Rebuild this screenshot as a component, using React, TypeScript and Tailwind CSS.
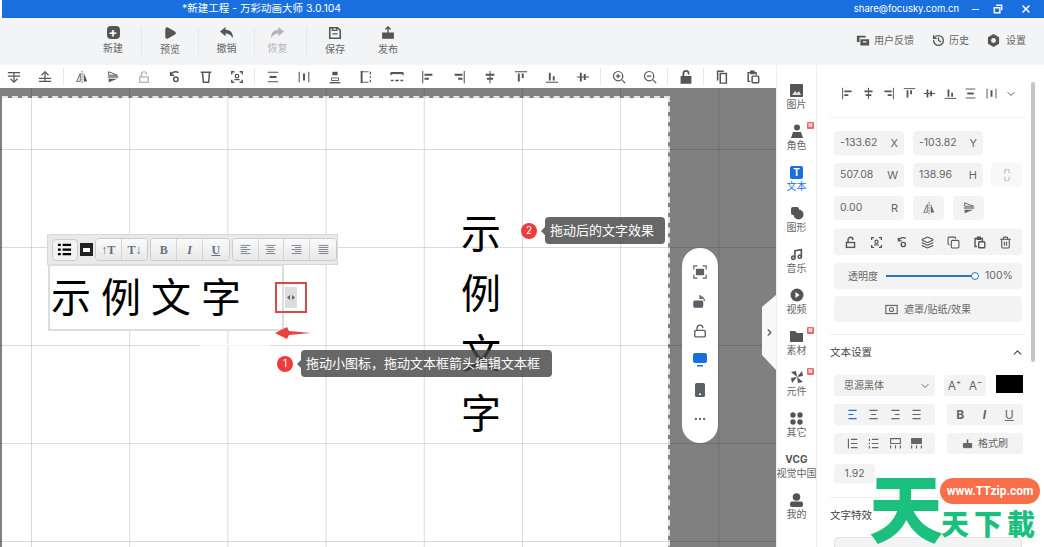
import type { ReactNode } from "react";
import {
  ChevronDown, ChevronRight, ChevronUp, Copy, History, Layers, LockOpen, Minus, MoreHorizontal, Music, Play, Trash2, X,
} from "lucide-react";

const cjk = "font-['Inter','Noto_Sans_CJK_SC',sans-serif]";

function Svg({ size = 14, className = "", children }: { size?: number; className?: string; children: ReactNode }) {
  return (
    <svg width={size} height={size} viewBox="0 0 16 16" fill="none" stroke="currentColor" strokeWidth="1.4" className={className}>
      {children}
    </svg>
  );
}

// small drawn icons shared by the toolbar and the panel
const icons: Record<string, ReactNode> = {
  down: <><path d="M1 3h14M1 7h14M8 3v11" /><path d="M4 10l4 4 4-4" /></>,
  up: <><path d="M1 13h14M1 9.5h14M8 13V2" /><path d="M4 6l4-4 4 4" /></>,
  flipH: <><path d="M8 1v14" strokeWidth="1" strokeDasharray="2 1" /><path d="M6 4v9H2z" strokeWidth="1" /><path d="M10 3v10h4z" fill="currentColor" stroke="none" /></>,
  flipV: <><path d="M2 8h12" /><path d="M3 2l10 4H3z" strokeWidth="1.1" /><path d="M3 10h10L3 14z" fill="currentColor" stroke="none" /></>,
  lockLight: <><rect x="3" y="8" width="10" height="6" /><path d="M5 8V5a3 3 0 0 1 6 0" /></>,
  lock: <><rect x="3" y="8" width="10" height="6" strokeWidth="1.7" /><path d="M5 8V4.5a3 3 0 0 1 6 0V5" strokeWidth="1.7" /></>,
  rotate: <><circle cx="9" cy="10.5" r="2.6" strokeWidth="1.7" /><path d="M3 6a6 6 0 0 1 9-3M3 2v4h4" strokeWidth="1.7" /></>,
  trash: <><path d="M2 2.5h12M4 3l1 11h6l1-11" strokeWidth="1.7" /></>,
  focus: <><path d="M2 5V2h3M11 2h3v3M14 11v3h-3M5 14H2v-3" strokeWidth="1.6" /><circle cx="8" cy="7" r="2" /><path d="M5 11h6" /></>,
  distV: <><path d="M2 2.5h12M2 13.5h12" strokeWidth="1.2" /><path d="M4 8h8" strokeWidth="2.4" /></>,
  distH: <><path d="M2.5 2v12M13.5 2v12" strokeWidth="1.2" /><path d="M8 4v8" strokeWidth="2.4" /></>,
  topEq: <><path d="M2 14.5h12" strokeWidth="1.6" /><path d="M4 9h8v3H4z" strokeWidth="1" /><path d="M5 2h6v4H5z" fill="currentColor" stroke="none" /></>,
  sideEq: <><path d="M3 1v14" strokeWidth="2.2" /><path d="M3 2h8M3 14h8" strokeWidth="1" /><path d="M13 2v3M13 7v2M13 11v3" /></>,
  rowEq: <><path d="M1 3.5h14" strokeWidth="2.4" /><path d="M1 3v3M15 3v3" /><path d="M1 12h3M6 12h4M12 12h3" strokeWidth="1.6" /></>,
  alignL: <><path d="M2 1v14" strokeWidth="1.2" /><path d="M4 5.5h9M4 10h5" strokeWidth="2.2" /></>,
  alignR: <><path d="M14 1v14" strokeWidth="1.2" /><path d="M3 5.5h9M7 10h5" strokeWidth="2.2" /></>,
  alignC: <><path d="M8 1v14" strokeWidth="1.2" /><path d="M3 5.5h10M4.5 10h7" strokeWidth="2.2" /></>,
  alignT: <><path d="M1 2h14" strokeWidth="1.2" /><path d="M5.5 4v9M10 4v5" strokeWidth="2.2" /></>,
  alignB: <><path d="M1 14h14" strokeWidth="1.2" /><path d="M5.5 3v9M10 7v5" strokeWidth="2.2" /></>,
  alignM: <><path d="M1 8h14" strokeWidth="1.2" /><path d="M5.5 3v10M10 4.5v7" strokeWidth="2.2" /></>,
  zoomIn: <><circle cx="7" cy="7" r="5.3" /><path d="M11 11l4 4M4.5 7h5M7 4.5v5" /></>,
  zoomOut: <><circle cx="7" cy="7" r="5.3" /><path d="M11 11l4 4M4.5 7h5" /></>,
  unlock: <><rect x="2.5" y="7.5" width="11" height="7.5" fill="currentColor" /><path d="M5 8V4a3 3 0 0 1 6 0v1" strokeWidth="2" /></>,
  copy: <><path d="M6 4h7v11H6z" strokeWidth="1.7" /><path d="M3 12V1.5h7" strokeWidth="1.7" /></>,
  paste: <><rect x="7" y="7" width="7.5" height="7.5" rx="1" strokeWidth="1.7" /><path d="M5 13H2.5V3h9v3M5.5 1.5h3.5V4H5.5z" strokeWidth="1.7" /></>,
};

const toolGroups = [
  ["down", "up"],
  ["flipH", "flipV", "lockLight", "rotate", "trash", "focus"],
  ["distV", "distH", "topEq", "sideEq", "rowEq", "alignL", "alignR", "alignC", "alignT", "alignB", "alignM"],
  ["zoomIn", "zoomOut"],
  ["unlock"],
  ["copy", "paste"],
];

const menuItems: { label: string; icon: ReactNode; width: string; muted?: boolean; rule?: boolean }[] = [
  {
    label: "新建",
    width: "w-[57px]",
    rule: true,
    icon: <span className="flex h-[13px] w-[13px] items-center justify-center rounded-sm bg-[#555] text-[13px] font-bold leading-none text-white">+</span>,
  },
  { label: "预览", width: "w-[57px]", rule: true, icon: <Play size={14} fill="#555" stroke="#555" /> },
  {
    label: "撤销",
    width: "w-[56px]",
    rule: true,
    icon: <svg width="15" height="13" viewBox="0 0 16 14"><path d="M7 1L1 6l6 5V8c3 0 5 1 8 5 0-6-3-9-8-9z" fill="#555" /></svg>,
  },
  {
    label: "恢复",
    width: "w-[52px] pr-[6px]",
    muted: true,
    rule: true,
    icon: <svg width="15" height="13" viewBox="0 0 16 14"><path d="M9 1l6 5-6 5V8C6 8 4 9 1 13c0-6 3-9 8-9z" fill="#b5b5b5" /></svg>,
  },
  {
    label: "保存",
    width: "w-[56px]",
    icon: <Svg size={14} className="text-[#555]"><path d="M2 2h9l3 3v9H2z" strokeWidth="1.8" /><path d="M5 2v3h5V2M5 9h6" strokeWidth="1.6" /></Svg>,
  },
  {
    label: "发布",
    width: "w-[50px]",
    icon: <Svg size={14} className="text-[#555]"><path d="M2 8h12v6H2z" fill="currentColor" /><path d="M8 9V2M5 4l3-3 3 3" strokeWidth="1.6" /></Svg>,
  },
];

const rail: { label: string; icon: ReactNode; badge?: boolean; active?: boolean }[] = [
  { label: "图片", icon: <svg width="13" height="13" viewBox="0 0 13 13"><rect width="13" height="13" rx="1" fill="#555" /><path d="M2 11l3-4 2 2 2-2 2 4z" fill="#ddd" /></svg> },
  { label: "角色", badge: true, icon: <svg width="14" height="14" viewBox="0 0 14 14" fill="#555"><circle cx="7" cy="3.5" r="3" /><path d="M1 14l2-6h8l2 6z" /></svg> },
  { label: "文本", active: true, icon: <span className="flex h-[13px] w-[13px] items-center justify-center rounded-[2px] bg-[#1a6fdf] text-[10px] font-bold leading-none text-white">T</span> },
  { label: "图形", icon: <svg width="14" height="14" viewBox="0 0 14 14" fill="#555"><rect x="1" y="1" width="8" height="8" rx="2" /><circle cx="8.5" cy="8.5" r="5" /></svg> },
  { label: "音乐", icon: <Music size={13} stroke="#555" strokeWidth={3} /> },
  { label: "视频", icon: <svg width="14" height="14" viewBox="0 0 14 14"><circle cx="7" cy="7" r="6.5" fill="#555" /><path d="M5.5 4l4 3-4 3z" fill="#fff" /></svg> },
  { label: "素材", badge: true, icon: <svg width="13" height="13" viewBox="0 0 13 13" fill="#555"><path d="M0 1h5l2 2h6v9H0z" /></svg> },
  { label: "元件", badge: true, icon: <svg width="14" height="14" viewBox="0 0 14 14" fill="#555"><path d="M7 7L1 2l5-1zM7 7l5-6 1 5zM7 7l6 5-5 1zM7 7l-5 6-1-5z" /></svg> },
  { label: "其它", icon: <svg width="13" height="13" viewBox="0 0 13 13" fill="#555"><circle cx="3" cy="3" r="2.7" /><circle cx="10" cy="3" r="2.7" /><circle cx="3" cy="10" r="2.7" /><circle cx="10" cy="10" r="2.7" /></svg> },
  { label: "视觉中国", icon: <span className="text-[10px] font-bold leading-[14px] tracking-[0.2px] text-[#555]">VCG</span> },
  { label: "我的", icon: <svg width="13" height="14" viewBox="0 0 13 14" fill="#555"><circle cx="6.5" cy="4" r="3.8" /><rect y="8.5" width="13" height="5.5" rx="2" /></svg> },
];

const miniGroups: string[][] = [["↑T", "T↓"], ["B", "I", "U"], ["l", "c", "r", "j"]];

const miniAlign: Record<string, string> = {
  l: "M2 3h12M2 5.5h8M2 8h12M2 10.5h8M2 13h12",
  c: "M2 3h12M4 5.5h8M2 8h12M4 10.5h8M2 13h12",
  r: "M2 3h12M6 5.5h8M2 8h12M6 10.5h8M2 13h12",
  j: "M2 3h12M2 5.5h12M2 8h12M2 10.5h12M2 13h12",
};

function Field({ value, tag }: { value: string; tag: string }) {
  return (
    <div className="flex h-6 w-[70px] items-center justify-between rounded-sm bg-[#f3f3f3] px-[6px] text-[10.5px] text-[#666]">
      <span>{value}</span>
      <span className="text-[11px]">{tag}</span>
    </div>
  );
}

function Chip({ children, className = "" }: { children: ReactNode; className?: string }) {
  return <div className={`flex h-[21px] items-center rounded-[3px] bg-[#f3f3f3] text-[#666] ${className}`}>{children}</div>;
}

function Lines({ kind, active }: { kind: "l" | "c" | "r" | "j"; active?: boolean }) {
  const d = { l: "M3 3h10M3 8h6M3 13h10", c: "M3 3h10M5 8h6M3 13h10", r: "M3 3h10M7 8h6M3 13h10", j: "M3 3h10M3 8h10M3 13h10" }[kind];
  return <Svg size={13} className={active ? "text-[#1a6fdf]" : "text-[#666]"}><path d={d} /></Svg>;
}

function Callout({ n, text, className }: { n: number; text: string; className: string }) {
  return (
    <div className={`absolute flex items-center gap-[8px] ${className}`}>
      <span className="flex h-4 w-4 items-center justify-center rounded-full bg-[#ee3b3b] text-[10px] text-white">{n}</span>
      <span className="flex h-[27px] flex-1 items-center rounded-sm bg-[rgba(70,70,70,0.82)] pl-[5px] text-[13px] text-white">{text}</span>
      <span className="absolute left-[20px] top-[10px] h-0 w-0 border-y-[4px] border-r-[4px] border-y-transparent border-r-[#676767]" />
    </div>
  );
}

export default function App() {
  return (
    <div className={`relative flex h-[547px] w-[1044px] flex-col overflow-hidden bg-white ${cjk}`}>
      {/* title bar */}
      <header className="relative ml-[2px] flex h-[18px] shrink-0 items-center justify-end bg-[#1a6fdf] pr-[12px] text-white">
        <span className="absolute left-[180px] text-[10.5px]">*新建工程 - 万彩动画大师 3.0.104</span>
        <span className="text-[9.5px]">share@focusky.com.cn</span>
        <Minus size={11} strokeWidth={2.5} className="ml-[11px]" />
        <Svg size={10} className="ml-[12px]"><path d="M5 2h9v8M2 6h9v8H2z" strokeWidth="2.2" /></Svg>
        <X size={12} strokeWidth={3} className="ml-[17px]" />
      </header>

      {/* main menu */}
      <nav className="flex h-[47px] shrink-0 items-center bg-[#f3f4f5] pb-[2px] pl-[85px] pr-[18px] text-[#666]">
        {menuItems.map((m) => (
          <div key={m.label} className={`flex h-[28px] flex-col items-center justify-center gap-[2px] ${m.width} ${m.rule ? "border-r border-[#e8e8e8]" : ""}`}>
            <span className="flex h-[14px] items-center">{m.icon}</span>
            <span className={`text-[10px] leading-[14px] ${m.muted ? "text-[#b5b5b5]" : ""}`}>{m.label}</span>
          </div>
        ))}
        <div className="ml-auto flex items-center text-[10px]">
          <Svg size={14} className="text-[#555]"><path d="M1 2h10v2H4v5H1zM5 6h10v7H5z" fill="currentColor" stroke="none" /><path d="M8 9h4" stroke="#fff" /></Svg>
          <span className="ml-[4px]">用户反馈</span>
          <History size={13} strokeWidth={2.4} className="ml-[18px] text-[#555]" />
          <span className="ml-[4px]">历史</span>
          <svg width="13" height="13" viewBox="0 0 14 14" className="ml-[18px]"><path d="M7 0l6 3.5v7L7 14l-6-3.5v-7z" fill="#555" /><circle cx="7" cy="7" r="2.6" fill="#f3f4f5" /></svg>
          <span className="ml-[6px]">设置</span>
        </div>
      </nav>

      <div className="flex min-h-0 flex-1">
        {/* workspace */}
        <div className="flex w-[776px] shrink-0 flex-col">
          <div className="flex h-[23px] shrink-0 items-center text-[#555]">
            {toolGroups.map((group, i) => (
              <div key={i} className={`flex h-[17px] items-center ${i === 0 ? "-ml-[2px] pr-[3px]" : i === 5 ? "pl-[2px]" : "px-[2px]"} ${i < 5 ? "border-r border-[#e6e6e6]" : ""}`}>
                {group.map((name) => (
                  <span key={name} className={`flex w-[31px] justify-center ${name === "lockLight" ? "text-[#b0b0b0]" : ""}`}>
                    <Svg size={14}>{icons[name]}</Svg>
                  </span>
                ))}
              </div>
            ))}
          </div>

          <div className="relative min-h-0 flex-1 overflow-hidden bg-[#808080]">
            {/* page, positioned on the free canvas */}
            <div className="absolute left-[2px] top-[8px] h-[460px] w-[668px] border-r-2 border-t-2 border-dashed border-[#e4e4e4] bg-white bg-clip-padding" />
            <div className="absolute inset-0 bg-[linear-gradient(to_right,rgba(0,0,0,0.14)_1px,transparent_1px),linear-gradient(to_bottom,rgba(0,0,0,0.14)_1px,transparent_1px)] bg-[size:98.2px_98px] bg-[position:31px_61px]" />
            <div className="absolute left-[200px] top-[256px] h-[2px] w-[70px] bg-white/70" />

            {/* text box being edited */}
            <div className="absolute left-[47px] top-[146px] flex h-[31px] w-[291px] items-center gap-[2px] border border-[#d8d8d8] bg-[#e9e9e9] pl-[4px] font-['Liberation_Serif',serif] text-[12px] font-bold text-[#667080]">
              <span className="flex h-[22px] w-[26px] items-center justify-center rounded-sm border border-[#ccc] bg-[#f2f2f2]">
                <Svg size={15} className="text-black"><path d="M6 3h9M6 8h9M6 13h9M1 3h3M1 8h3M1 13h3" strokeWidth="2.4" /></Svg>
              </span>
              <span className="flex h-[13px] w-[13px] items-center justify-center bg-[#222]"><span className="h-[4px] w-[7px] bg-white" /></span>
              {miniGroups.map((g, i) => (
                <div key={i} className="flex overflow-hidden rounded-sm border border-[#ccc]">
                  {g.map((t) => (
                    <span key={t} className={`flex h-[21px] w-[26px] items-center justify-center border-r border-[#d5d5d5] bg-gradient-to-b from-[#fafafa] to-[#e8e8e8] last:border-r-0 ${t === "I" ? "italic" : ""} ${t === "U" ? "underline" : ""}`}>
                      {miniAlign[t] ? <Svg size={13} className="text-[#667080]"><path d={miniAlign[t]} strokeWidth="1" /></Svg> : t}
                    </span>
                  ))}
                </div>
              ))}
            </div>
            <div className="absolute left-[48px] top-[176px] flex h-[67px] w-[236px] items-center whitespace-nowrap border-2 border-[#ddd] bg-white pl-[1px] text-[40px] tracking-[10px] text-black">
              示例文字
            </div>
            <div className="absolute left-[275px] top-[194px] flex h-[31px] w-[32px] items-center justify-center border-2 border-[#d84a4a]">
              <span className="flex h-[21px] w-[12px] items-center justify-center bg-[#ddd]">
                <svg width="8" height="5" viewBox="0 0 8 5" fill="#666"><path d="M3 0v5L0 2.500zM5 0v5l3-2.500z" /></svg>
              </span>
            </div>
            <svg width="36" height="12" viewBox="0 0 36 12" className="absolute left-[275px] top-[239px]"><path d="M0 6L12 0l2 4 22 2-22 2-2 4z" fill="#e8413e" /></svg>

            {/* result after dragging */}
            <div className="absolute left-[461px] top-[116px] flex w-[40px] flex-col items-center text-[40px] leading-[60px] text-black">
              <span>示</span><span>例</span><span>文</span><span>字</span>
            </div>

            {/* callouts */}
            <Callout n={1} text="拖动小图标，拖动文本框箭头编辑文本框" className="left-[277px] top-[262px] w-[275px]" />
            <Callout n={2} text="拖动后的文字效果" className="left-[521px] top-[129px] w-[144px]" />

            {/* floating view controls */}
            <div className="absolute left-[682px] top-[160px] flex h-[195px] w-[36px] flex-col items-center justify-between rounded-full bg-white py-[17px] text-[#5c6068]">
              <Svg size={14}><path d="M1 5V1h4M11 1h4v4M15 11v4h-4M5 15H1v-4" /><rect x="4" y="5" width="8" height="6" fill="currentColor" /></Svg>
              <Svg size={14}><rect x="1" y="8" width="10" height="7" rx="1" fill="currentColor" /><path d="M8 3a5 5 0 0 1 5 5M8 1v4h3" /></Svg>
              <LockOpen size={14} strokeWidth={2.4} />
              <svg width="14" height="14" viewBox="0 0 14 14" fill="#1a6fdf"><rect width="14" height="10" rx="2" /><rect x="4" y="12" width="6" height="1.500" /></svg>
              <svg width="10" height="14" viewBox="0 0 10 14"><rect width="10" height="14" rx="1.500" fill="#5c6068" /><rect x="4" y="10.500" width="2" height="1.500" fill="#fff" /></svg>
              <MoreHorizontal size={14} />
            </div>
            <div className="absolute right-0 top-[207px] flex h-[75px] w-[14px] items-center justify-center bg-[#f8f8f8] [clip-path:polygon(100%_0,0_12px,0_60px,100%_100%)]">
              <ChevronRight size={11} strokeWidth={2.5} className="text-[#555]" />
            </div>
          </div>
        </div>

        {/* asset rail */}
        <aside className="relative flex w-[41px] shrink-0 flex-col items-center border-x border-[#eeeeee] pt-[18px] text-[#666]">
          {rail.map((r) => (
            <div key={r.label} className="relative mb-[13px] flex w-full flex-col items-center">
              <span className="flex h-[14px] items-center">{r.icon}</span>
              <span className={`whitespace-nowrap text-[10px] leading-[14px] ${r.active ? "text-[#1a6fdf]" : ""}`}>{r.label}</span>
              {r.badge && <span className="absolute -top-[2px] right-[2px] flex h-[7px] w-[7px] items-center justify-center rounded-[1px] bg-[#e86a6a] text-[5px] font-bold leading-none text-white">N</span>}
            </div>
          ))}
        </aside>

        {/* property panel */}
        <aside className="relative min-w-0 flex-1 overflow-hidden pl-[17px] text-[#666]">
          <div className="absolute right-[9px] top-[17px] h-[280px] w-[4px] rounded bg-[#c4c4c4]" />
          <div className="-ml-[4px] flex h-[53px] w-[195px] items-center justify-between border-b border-[#f0f0f0] pl-[11px] pr-[8px] pt-[5px] text-[#555]">
            {["alignL", "alignC", "alignR", "alignT", "alignM", "alignB", "distV", "distH"].map((n) => (
              <Svg key={n} size={13}>{icons[n]}</Svg>
            ))}
            <ChevronDown size={12} />
          </div>

          <div className="mt-[13px] flex w-[188px] flex-col gap-2">
            <div className="flex gap-[9px]"><Field value="-133.62" tag="X" /><Field value="-103.82" tag="Y" /></div>
            <div className="flex gap-[9px]">
              <Field value="507.08" tag="W" /><Field value="138.96" tag="H" />
              <div className="-ml-[1px] flex h-6 w-[31px] items-center justify-center rounded-sm bg-[#f8f8f8] text-[#bbb]"><Svg size={12}><path d="M5 6V3a3 3 0 0 1 6 0v3M5 10v3a3 3 0 0 0 6 0v-3" /></Svg></div>
            </div>
            <div className="mt-[1px] flex gap-[9px]">
              <Field value="0.00" tag="R" />
              <div className="flex h-6 w-[31px] items-center justify-center rounded-sm bg-[#f3f3f3]"><Svg size={14}>{icons.flipH}</Svg></div>
              <div className="flex h-6 w-[31px] items-center justify-center rounded-sm bg-[#f3f3f3]"><Svg size={14}>{icons.flipV}</Svg></div>
            </div>
            <div className="mt-[1px] flex h-[26px] items-center justify-around rounded-sm bg-[#f3f3f3] px-[4px] text-[#555]">
              <Svg size={13}>{icons.lock}</Svg>
              <Svg size={13}>{icons.focus}</Svg>
              <Svg size={13}>{icons.rotate}</Svg>
              <Layers size={13} />
              <Copy size={13} />
              <Svg size={13}>{icons.paste}</Svg>
              <Trash2 size={13} />
            </div>
            <div className="flex h-[26px] items-center rounded-sm bg-[#f3f3f3] pl-[14px] text-[10px]">
              <span>透明度</span>
              <div className="relative ml-[8px] h-[2px] w-[90px] bg-[#2c72c9]">
                <span className="absolute -right-[3px] -top-[3px] h-2 w-2 rounded-full border border-[#2c72c9] bg-white" />
              </div>
              <span className="ml-[9px] text-[10.5px]">100%</span>
            </div>
            <div className="-mt-[1px] flex h-[26px] items-center justify-center gap-[6px] rounded-sm bg-[#f3f3f3] text-[10px]">
              <Svg size={13}><rect x="1" y="3" width="14" height="10" /><circle cx="8" cy="8" r="2.5" /></Svg>
              遮罩/贴纸/效果
            </div>
          </div>

          <div className="-ml-[4px] mt-[12px] flex h-[36px] w-[195px] items-center justify-between border-t border-[#f0f0f0] pr-[1px] text-[10.5px] text-[#444]">
            <span>文本设置</span>
            <ChevronUp size={13} />
          </div>

          <div className="mt-[5px] flex w-[189px] flex-col gap-2">
            <div className="flex items-start">
              <Chip className="w-[101px] justify-between pl-[10px] pr-[4px] text-[10px] text-[#333]">思源黑体<ChevronDown size={12} /></Chip>
              <Chip className="ml-[9px] w-[42px] justify-around text-[12px]"><span>A⁺</span><span>A⁻</span></Chip>
              <span className="ml-[10px] h-[18px] w-[27px] bg-black" />
            </div>
            <div className="flex justify-between">
              <Chip className="w-[101px] justify-around px-[8px]"><Lines kind="l" active /><Lines kind="c" /><Lines kind="r" /><Lines kind="j" /></Chip>
              <Chip className="w-[76px] justify-around text-[12px] font-bold"><span>B</span><span className="italic">I</span><span className="font-normal underline">U</span></Chip>
            </div>
            <div className="flex justify-between">
              <Chip className="w-[101px] justify-around px-[8px]">
                <Svg size={13}><path d="M6 3h8M6 8h8M6 13h8M3 2v12" /></Svg>
                <Svg size={13}><path d="M6 3h8M6 8h8M6 13h8M3 2v3M3 7v2M3 11v3" /></Svg>
                <Svg size={13}><path d="M2 2h12v6H2zM2 14V10M14 14V10M8 14V10" /></Svg>
                <Svg size={13}><path d="M2 2h12v6H2z" fill="currentColor" /><path d="M2 14V10M14 14V10M8 14V10" /></Svg>
              </Chip>
              <Chip className="w-[76px] justify-center gap-[5px] text-[10px]">
                <Svg size={11}><path d="M2 8h12v6H2z" fill="currentColor" /><path d="M8 2v6" strokeWidth="2.4" /></Svg>
                格式刷
              </Chip>
            </div>
            <div className="mt-[2px] flex h-[19px] w-[41px] items-center justify-center rounded-sm bg-[#f3f3f3] text-[10.5px]">1.92</div>
          </div>

          <div className="-ml-[4px] mt-[14px] flex h-[36px] w-[195px] items-center border-t border-[#f0f0f0] text-[10.5px] text-[#444]">文字特效</div>
          <div className="mt-[4px] h-[30px] w-[188px] rounded-sm border border-[#e4e4e4] bg-[#f3f3f3]" />
        </aside>
      </div>

      {/* watermark sits over the panel */}
      <div className="pointer-events-none absolute left-[870px] top-[466px] h-[81px] w-[174px] font-['Noto_Sans_CJK_SC',sans-serif] font-black text-[#1cc07e]">
        <span className="absolute -left-[1px] top-0 text-[74px] leading-[78px]">天</span>
        <span className="absolute left-[70px] top-[12px] flex h-[26px] w-[100px] items-center justify-center rounded-full bg-[#f96f4a] font-['Roboto',sans-serif] text-[12px] font-bold text-white">www.TTzip.com</span>
        <span className="absolute left-[71px] top-[40px] whitespace-nowrap text-[28px] leading-[34px] tracking-[5px]">天下載</span>
      </div>
    </div>
  );
}
